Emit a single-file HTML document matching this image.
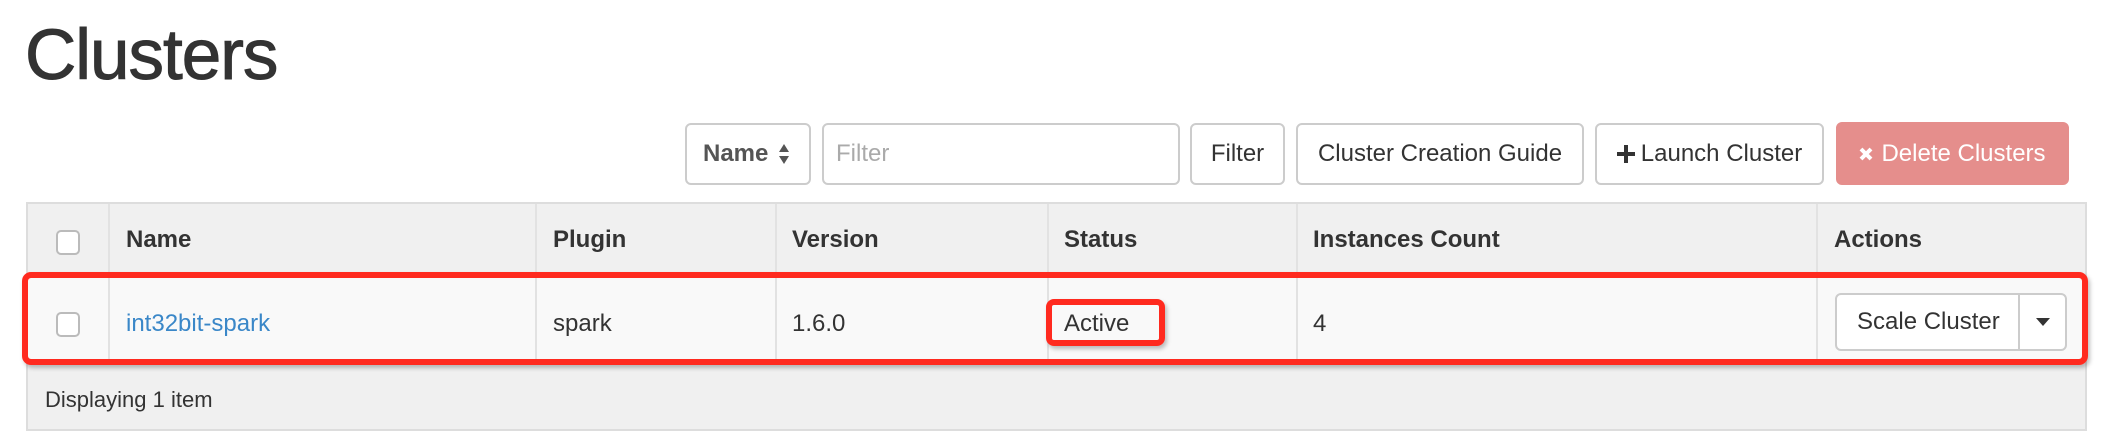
<!DOCTYPE html>
<html><head><meta charset="utf-8"><style>
*{box-sizing:border-box;margin:0;padding:0}
body{width:2114px;height:446px;background:#fff;font-family:"Liberation Sans",Arial,sans-serif;color:#333;position:relative;overflow:hidden}
.a{position:absolute}
.btn{position:absolute;border:2px solid #ccc;border-radius:6px;background:#fff;font-size:24px;display:flex;align-items:center;justify-content:center;color:#333}
.cb{position:absolute;width:24px;height:25px;border:2px solid #bbb;border-radius:5px;background:#fff}
.h{position:absolute;font-weight:bold;font-size:24px;top:226px}
.c{position:absolute;font-size:24px;top:310px}
.v{position:absolute;width:2px;background:#e2e2e2}
</style></head><body>
<div class="a" style="left:25px;top:15px;font-size:71px;letter-spacing:-1px;color:#333;-webkit-text-stroke:1px #333">Clusters</div>

<div class="btn" style="left:685px;top:123px;width:126px;height:62px;justify-content:flex-start;padding-left:16px;font-weight:bold;color:#555">Name<svg style="margin-left:10px" width="12" height="22" viewBox="0 0 12 22"><path d="M6 1L11 9H1Z M6 21L11 13H1Z" fill="#555"/></svg></div>
<div class="btn" style="left:822px;top:123px;width:358px;height:62px;justify-content:flex-start;padding-left:12px;color:#aaa">Filter</div>
<div class="btn" style="left:1190px;top:123px;width:95px;height:62px">Filter</div>
<div class="btn" style="left:1296px;top:123px;width:288px;height:62px">Cluster Creation Guide</div>
<div class="btn" style="left:1595px;top:123px;width:229px;height:62px"><svg width="18" height="18" viewBox="0 0 18 18" style="margin-right:6px"><path d="M7 0H11V7H18V11H11V18H7V11H0V7H7Z" fill="#333"/></svg>Launch Cluster</div>
<div class="btn" style="left:1836px;top:122px;width:233px;height:63px;background:#e58e8c;border-color:#e58e8c;color:#fff"><svg width="14" height="14" viewBox="0 0 14 14" style="margin-right:8px"><path d="M2 2L12 12M12 2L2 12" stroke="#fff" stroke-width="4"/></svg>Delete Clusters</div>

<div class="a" style="left:26px;top:202px;width:2061px;height:229px;border:2px solid #ddd;background:#f0f0f0"></div>
<div class="a" style="left:28px;top:276px;width:2057px;height:2px;background:#ddd"></div>
<div class="a" style="left:28px;top:278px;width:2057px;height:82px;background:#f9f9f9"></div>
<div class="a" style="left:28px;top:360px;width:2057px;height:2px;background:#ddd"></div>
<div class="v" style="left:108px;top:204px;height:156px"></div>
<div class="v" style="left:535px;top:204px;height:156px"></div>
<div class="v" style="left:775px;top:204px;height:156px"></div>
<div class="v" style="left:1047px;top:204px;height:156px"></div>
<div class="v" style="left:1296px;top:204px;height:156px"></div>
<div class="v" style="left:1816px;top:204px;height:156px"></div>

<div class="cb" style="left:56px;top:230px"></div>
<div class="cb" style="left:56px;top:312px"></div>
<div class="h" style="left:126px">Name</div>
<div class="h" style="left:553px">Plugin</div>
<div class="h" style="left:792px">Version</div>
<div class="h" style="left:1064px">Status</div>
<div class="h" style="left:1313px">Instances Count</div>
<div class="h" style="left:1834px">Actions</div>

<div class="c" style="left:126px;color:#3a87c8">int32bit-spark</div>
<div class="c" style="left:553px">spark</div>
<div class="c" style="left:792px">1.6.0</div>
<div class="c" style="left:1064px">Active</div>
<div class="c" style="left:1313px">4</div>
<div class="btn" style="left:1835px;top:293px;width:232px;height:58px;justify-content:flex-start;padding-left:20px">Scale Cluster</div>
<div class="a" style="left:2018px;top:295px;width:2px;height:54px;background:#ccc"></div>
<svg class="a" style="left:2035px;top:317px" width="16" height="10" viewBox="0 0 16 10"><path d="M1 1H15L8 9Z" fill="#333"/></svg>

<div class="a" style="left:45px;top:387px;font-size:22px">Displaying 1 item</div>

<div class="a" style="left:22px;top:272px;width:2066px;height:93px;border:6px solid #ff2a1f;border-radius:9px;box-shadow:2px 3px 4px rgba(0,0,0,.25)"></div>
<div class="a" style="left:1046px;top:299px;width:119px;height:47px;border:6px solid #ff2a1f;border-radius:8px;box-shadow:2px 3px 4px rgba(0,0,0,.25)"></div>
</body></html>
